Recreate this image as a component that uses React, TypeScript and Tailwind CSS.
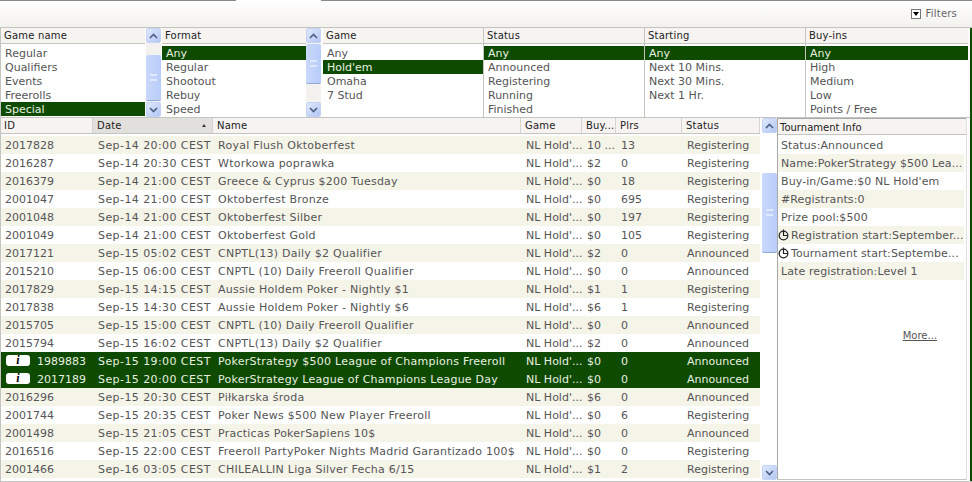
const font = "[font-family:'DejaVu_Sans',sans-serif]"

const rows = [
  ['2017828', 'Sep-14 20:00 CEST', 'Royal Flush Oktoberfest', "NL Hold'...", '10 ...', '13', 'Registering'],
  ['2016287', 'Sep-14 20:30 CEST', 'Wtorkowa poprawka', "NL Hold'...", '$2', '0', 'Registering'],
  ['2016379', 'Sep-14 21:00 CEST', 'Greece & Cyprus $200 Tuesday', "NL Hold'...", '$0', '18', 'Registering'],
  ['2001047', 'Sep-14 21:00 CEST', 'Oktoberfest Bronze', "NL Hold'...", '$0', '695', 'Registering'],
  ['2001048', 'Sep-14 21:00 CEST', 'Oktoberfest Silber', "NL Hold'...", '$0', '197', 'Registering'],
  ['2001049', 'Sep-14 21:00 CEST', 'Oktoberfest Gold', "NL Hold'...", '$0', '105', 'Registering'],
  ['2017121', 'Sep-15 05:02 CEST', 'CNPTL(13) Daily $2 Qualifier', "NL Hold'...", '$2', '0', 'Announced'],
  ['2015210', 'Sep-15 06:00 CEST', 'CNPTL (10) Daily Freeroll Qualifier', "NL Hold'...", '$0', '0', 'Announced'],
  ['2017829', 'Sep-15 14:15 CEST', 'Aussie Holdem Poker - Nightly $1', "NL Hold'...", '$1', '1', 'Registering'],
  ['2017838', 'Sep-15 14:30 CEST', 'Aussie Holdem Poker - Nightly $6', "NL Hold'...", '$6', '1', 'Registering'],
  ['2015705', 'Sep-15 15:00 CEST', 'CNPTL (10) Daily Freeroll Qualifier', "NL Hold'...", '$0', '0', 'Announced'],
  ['2015794', 'Sep-15 16:02 CEST', 'CNPTL(13) Daily $2 Qualifier', "NL Hold'...", '$2', '0', 'Announced'],
  ['1989883', 'Sep-15 19:00 CEST', 'PokerStrategy $500 League of Champions Freeroll', "NL Hold'...", '$0', '0', 'Announced'],
  ['2017189', 'Sep-15 20:00 CEST', 'PokerStrategy League of Champions League Day', "NL Hold'...", '$0', '0', 'Announced'],
  ['2016296', 'Sep-15 20:30 CEST', 'Piłkarska środa', "NL Hold'...", '$6', '0', 'Announced'],
  ['2001744', 'Sep-15 20:35 CEST', 'Poker News $500 New Player Freeroll', "NL Hold'...", '$0', '6', 'Registering'],
  ['2001498', 'Sep-15 21:05 CEST', 'Practicas PokerSapiens 10$', "NL Hold'...", '$0', '0', 'Announced'],
  ['2016516', 'Sep-15 22:00 CEST', 'Freeroll PartyPoker Nights Madrid Garantizado 100$', "NL Hold'...", '$0', '0', 'Registering'],
  ['2001466', 'Sep-16 03:05 CEST', 'CHILEALLIN Liga Silver Fecha 6/15', "NL Hold'...", '$1', '2', 'Registering'],
]

function ScrollBtn({ up }: { up?: boolean }) {
  return (
    <div className="h-[15px] w-[15px] shrink-0 flex items-center justify-center rounded-[2px] bg-gradient-to-br from-[#dfe8fd] to-[#b4c7f2] border border-[#c3d2f5]">
      <svg width="9" height="6" viewBox="0 0 9 6" className={up ? '' : 'rotate-180'}>
        <path d="M1 5 L4.5 1.5 L8 5" fill="none" stroke="#4d6185" strokeWidth="1.7" />
      </svg>
    </div>
  )
}

function Thumb({ className }: { className: string }) {
  return (
    <div className={`w-[15px] shrink-0 rounded-[2px] bg-gradient-to-r from-[#c9d8fb] to-[#b9cdf9] border-b border-[#8fa6d8] flex items-center justify-center ${className}`}>
      <div className="w-[7px] h-[7px] border-y-2 border-[#dfe8fd]" />
    </div>
  )
}

function FilterCol({ title, items, active, className }: { title: string; items: string[]; active: number; className: string }) {
  return (
    <div className={`flex flex-col ${className}`}>
      <div className="h-[16px] shrink-0 pl-[3px] bg-[#f6f3f1] border-b border-[#c4c4c0] text-[10px] leading-[15px] text-[#222] tracking-[0.2px]">{title}</div>
      <div className="pt-[2px] bg-white flex-1">
        {items.map((item, i) => (
          <div key={item} className={`h-[14px] overflow-hidden pl-[4px] text-[11px] leading-[16px] ${i === active ? 'bg-[#0e4a00] text-[#e8f0e0]' : 'text-[#555]'}`}>{item}</div>
        ))}
      </div>
    </div>
  )
}

function FilterScroll({ thumbClass, before }: { thumbClass: string; before: string }) {
  return (
    <div className="w-[15px] flex flex-col bg-[#f4f2ee]">
      <ScrollBtn up />
      <div className={`${before} shrink-0`} />
      <Thumb className={thumbClass} />
      <div className="flex-1" />
      <ScrollBtn />
    </div>
  )
}

const widths = ['w-[93px]', 'w-[120px]', 'w-[308px]', 'w-[61px]', 'w-[34px]', 'w-[66px]', 'w-[78px]']
const tracking = ['', 'tracking-[0.42px]', 'tracking-[0.25px]', '', '', '', '']

function InfoRow({ children, shade, clock }: { children: string; shade?: boolean; clock?: boolean }) {
  return (
    <div className={`h-[18px] flex items-start leading-[20px] text-[11px] tracking-[0.1px] text-[#555] whitespace-nowrap overflow-hidden ${clock ? 'pl-0' : 'pl-[3px]'} ${shade ? 'bg-[#f5f4e9]' : ''}`}>
      {clock && (
        <svg width="11" height="12" viewBox="0 0 11 12" className="mr-[2px] mt-[3px] shrink-0">
          <circle cx="5.5" cy="6.5" r="4.3" fill="none" stroke="#222" strokeWidth="1.3" />
          <path d="M5.5 0.5 V6.5 H9" fill="none" stroke="#222" strokeWidth="1.2" />
        </svg>
      )}
      {children}
    </div>
  )
}

export default function App() {
  return (
    <div className={`w-[972px] h-[482px] overflow-hidden bg-white flex flex-col relative border-b border-[#c4c4c0] ${font}`}>
      <div className="absolute right-0 top-0 bottom-0 w-[2px] bg-[#0e4a00]" />
      <div className="absolute left-0 top-0 bottom-0 w-[1px] bg-[#c4c4c0]" />
      {/* top bar */}
      <div className="h-[28px] shrink-0 bg-gradient-to-b from-white to-[#f2f1ee] flex items-center justify-end pr-[15px] border-b border-[#c4c4c0] relative">
        <div className="absolute left-0 top-0 h-[1px] w-[236px] bg-[#8a8a8a]" />
        <div className="absolute left-[321px] right-0 top-0 h-[1px] bg-[#8a8a8a]" />
        <div className="w-[10px] h-[10px] border border-[#777] bg-white flex items-center justify-center mr-[5px]">
          <div className="w-0 h-0 border-x-[3px] border-x-transparent border-t-[4px] border-t-black" />
        </div>
        <span className="text-[10px] text-[#666] tracking-[0.2px]">Filters</span>
      </div>

      {/* filter lists */}
      <div className="h-[90px] shrink-0 flex border-b border-[#c4c4c0] pr-[4px]">
        <FilterCol title="Game name" items={['Regular', 'Qualifiers', 'Events', 'Freerolls', 'Special']} active={4} className="w-[144px] ml-px" />
        <div className="w-[1px]" />
        <FilterScroll before="h-[12px]" thumbClass="h-[46px]" />
        <FilterCol title="Format" items={['Any', 'Regular', 'Shootout', 'Rebuy', 'Speed']} active={0} className="w-[144px] ml-px" />
        <FilterScroll before="h-[1px]" thumbClass="h-[40px]" />
        <div className="w-[2px]" />
        <FilterCol title="Game" items={['Any', "Hold'em", 'Omaha', '7 Stud']} active={1} className="w-[161px] border-r border-[#c4c4c0]" />
        <FilterCol title="Status" items={['Any', 'Announced', 'Registering', 'Running', 'Finished']} active={0} className="w-[161px] border-r border-[#c4c4c0]" />
        <FilterCol title="Starting" items={['Any', 'Next 10 Mins.', 'Next 30 Mins.', 'Next 1 Hr.']} active={0} className="w-[161px] border-r border-[#c4c4c0]" />
        <FilterCol title="Buy-ins" items={['Any', 'High', 'Medium', 'Low', 'Points / Free']} active={0} className="flex-1" />
      </div>

      {/* tournaments */}
      <div className="flex-1 flex min-h-0 pr-[5px]">
        <div className="w-[760px] shrink-0 overflow-hidden">
          <div className="h-[16px] flex bg-[#f6f3f1] border-b border-[#c4c4c0] text-[10px] leading-[17px] text-[#222] tracking-[0.2px]">
            {['ID', 'Date', 'Name', 'Game', 'Buy...', 'Plrs', 'Status'].map((h, i) => (
              <div key={h} className={`${widths[i]} shrink-0 pl-1 border-r border-[#d4d4d0] flex justify-between items-center pr-[6px] ${i === 1 ? 'bg-[#e2e0dd]' : ''}`}>
                {h}
                {i === 1 && <span className="w-0 h-0 border-x-[2px] border-x-transparent border-b-[3px] border-b-[#333]" />}
              </div>
            ))}
          </div>
          <div className="pt-[2px]">
            {rows.map((r, idx) => {
              const selected = idx === 12 || idx === 13
              return (
                <div key={r[0]} className={`h-[18px] flex text-[11px] leading-[20px] whitespace-nowrap ${selected ? 'bg-[#0e4a00] text-[#e8f0e0]' : idx % 2 === 0 ? 'bg-[#f5f4e9] text-[#555]' : 'bg-white text-[#555]'}`}>
                  {r.map((c, i) => (
                    <div key={i} className={`${widths[i]} ${tracking[i]} h-[18px] shrink-0 pl-[5px] overflow-hidden ${i === 0 && selected ? 'flex items-start' : ''}`}>
                      {i === 0 && selected && (
                        <span className="w-[24px] h-[11px] mt-[3px] bg-white rounded-[3px] mr-[7px] ml-px text-[12px] leading-[11px] text-center font-bold italic text-black [font-family:'Liberation_Serif',serif]">i</span>
                      )}
                      {c}
                    </div>
                  ))}
                </div>
              )
            })}
          </div>
        </div>

        <div className="w-[2px]" />
        <div className="w-[15px] flex flex-col">
          <ScrollBtn up />
          <div className="h-[40px] shrink-0" />
          <Thumb className="h-[80px]" />
          <div className="flex-1" />
          <ScrollBtn />
          <div className="h-[1px]" />
        </div>

        <div className="flex-1 flex flex-col border-l border-[#a9a9a9] mb-px border-b-[#c4c4c0] border-b border-r border-r-[#e0e0dc]">
          <div className="h-[17px] shrink-0 pl-[2px] bg-[#f6f3f1] border-b border-[#c4c4c0] border-t-[#a9a9a9] border-t text-[10px] leading-[17px] text-[#222]">Tournament Info</div>
          <div className="pt-[1px] pr-[2px] flex-1 flex flex-col">
            <InfoRow>Status:Announced</InfoRow>
            <InfoRow shade>Name:PokerStrategy $500 Lea...</InfoRow>
            <InfoRow>Buy-in/Game:$0 NL Hold'em</InfoRow>
            <InfoRow shade>#Registrants:0</InfoRow>
            <InfoRow>Prize pool:$500</InfoRow>
            <InfoRow shade clock>Registration start:September...</InfoRow>
            <InfoRow clock>Tournament start:Septembe...</InfoRow>
            <InfoRow shade>Late registration:Level 1</InfoRow>
            <div className="mt-[48px] text-right pr-[27px] text-[10px] text-[#555] underline">More...</div>
          </div>
        </div>
      </div>
    </div>
  )
}
